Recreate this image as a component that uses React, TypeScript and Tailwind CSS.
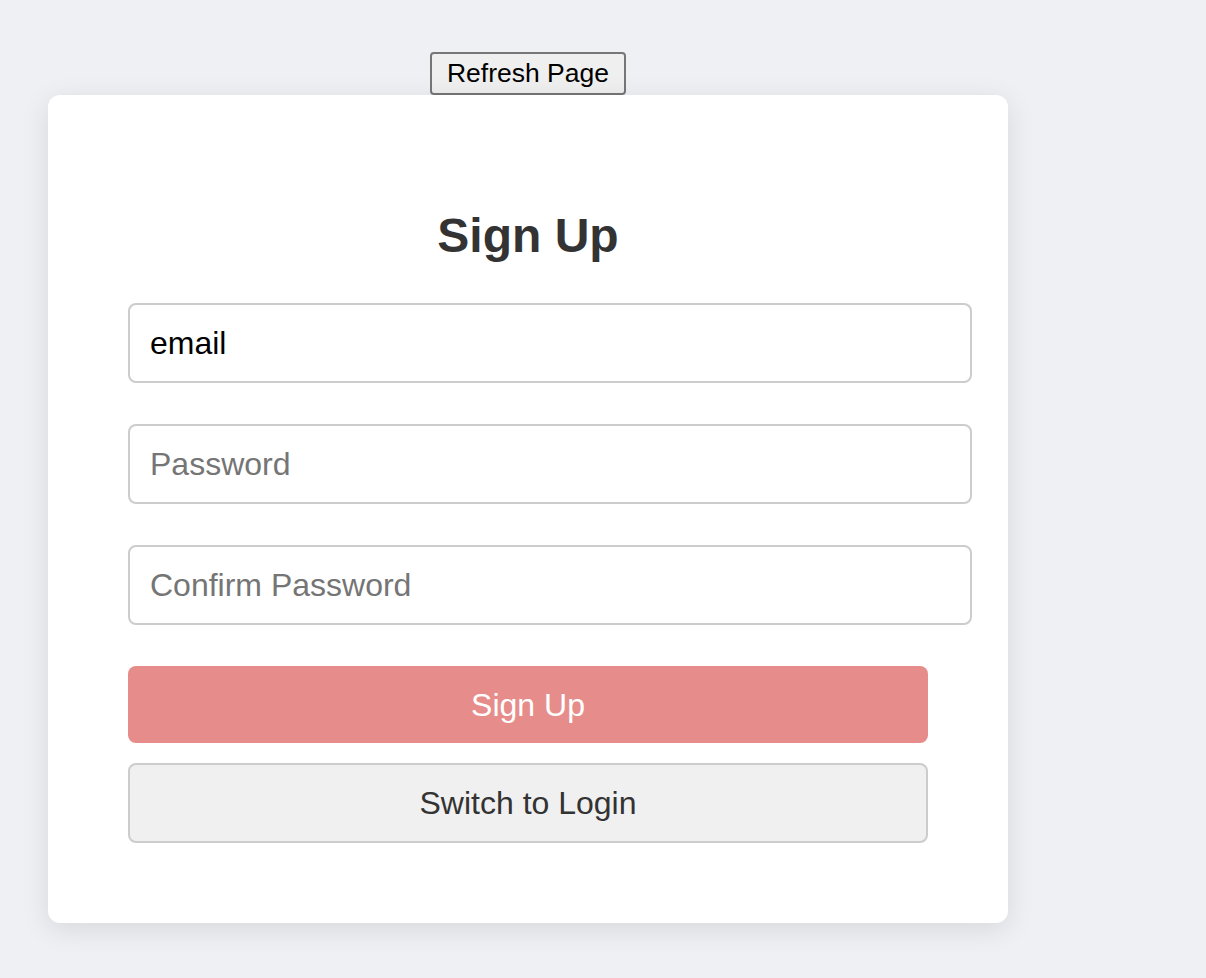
import React from "react";

export default function App() {
  return (
    <div
      className="min-h-screen w-full bg-[#eff0f4] pt-[52px] pl-[48px]"
      style={{ fontFamily: '"Liberation Sans", Arial, sans-serif' }}
    >
      <div className="flex w-[960px] flex-col items-center">
        <button className="h-[43px] rounded-[4px] border-2 border-[#767676] bg-[#efefef] px-[15px] pb-[2px] text-[26.5px] leading-[30px] text-black">
          Refresh Page
        </button>
        <div className="flex w-[960px] flex-col rounded-[12px] bg-white px-[80px] pt-[113px] pb-[80px] shadow-[0_6px_28px_rgba(0,0,0,0.1)]">
          <h2 className="mb-[39px] h-[56px] text-center text-[48px] font-bold leading-[56px] text-[#333333]">
            Sign Up
          </h2>
          <input
            type="email"
            defaultValue="email"
            className="mb-[41px] box-content h-[36px] w-full rounded-[8px] border-2 border-[#cccccc] bg-white px-[20px] py-[20px] text-[32px] leading-[36px] text-black outline-none placeholder:text-[#757575]"
          />
          <input
            type="password"
            placeholder="Password"
            className="mb-[41px] box-content h-[36px] w-full rounded-[8px] border-2 border-[#cccccc] bg-white px-[20px] py-[20px] text-[32px] leading-[36px] text-black outline-none placeholder:text-[#757575]"
          />
          <input
            type="password"
            placeholder="Confirm Password"
            className="mb-[41px] box-content h-[36px] w-full rounded-[8px] border-2 border-[#cccccc] bg-white px-[20px] py-[20px] text-[32px] leading-[36px] text-black outline-none placeholder:text-[#757575]"
          />
          <button className="mb-[20px] flex h-[77px] w-full items-center justify-center rounded-[8px] bg-[#e68d8b] text-[32px] text-white">
            Sign Up
          </button>
          <button className="flex h-[80px] w-full items-center justify-center rounded-[8px] border-2 border-[#cccccc] bg-[#f0f0f0] text-[32px] text-[#333333]">
            Switch to Login
          </button>
        </div>
      </div>
    </div>
  );
}
